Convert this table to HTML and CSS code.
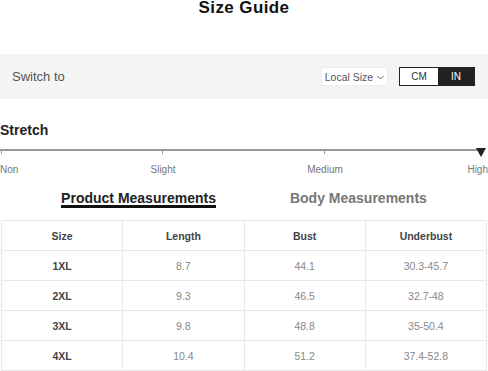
FILE: index.html
```html
<!DOCTYPE html>
<html>
<head>
<meta charset="utf-8">
<link rel="stylesheet" href="styles.css">
</head>
<body>
<div class="page">
  <h1 class="title">Size Guide</h1>
  <div class="switch-bar">
    <span class="switch-label">Switch to</span>
    <div class="switch-controls">
      <div class="local-size">Local Size
        <svg class="chev" width="7" height="5" viewBox="0 0 7 5"><path d="M0.5 1 L3.5 4 L6.5 1" fill="none" stroke="#666" stroke-width="1"/></svg>
      </div>
      <div class="unit-toggle">
        <span class="unit">CM</span>
        <span class="unit active">IN</span>
      </div>
    </div>
  </div>
  <div class="stretch">
    <div class="stretch-title">Stretch</div>
    <div class="scale">
      <div class="scale-line"></div>
      <span class="tick t0"></span>
      <span class="tick t1"></span>
      <span class="tick t2"></span>
      <span class="marker"></span>
    </div>
    <div class="scale-labels">
      <span class="lab l0">Non</span>
      <span class="lab l1">Slight</span>
      <span class="lab l2">Medium</span>
      <span class="lab l3">High</span>
    </div>
  </div>
  <div class="tabs">
    <span class="tab active">Product Measurements</span>
    <span class="tab">Body Measurements</span>
  </div>
  <table class="size-table">
    <thead>
      <tr><th>Size</th><th>Length</th><th>Bust</th><th>Underbust</th></tr>
    </thead>
    <tbody>
      <tr><td class="sz">1XL</td><td>8.7</td><td>44.1</td><td>30.3-45.7</td></tr>
      <tr><td class="sz">2XL</td><td>9.3</td><td>46.5</td><td>32.7-48</td></tr>
      <tr><td class="sz">3XL</td><td>9.8</td><td>48.8</td><td>35-50.4</td></tr>
      <tr><td class="sz">4XL</td><td>10.4</td><td>51.2</td><td>37.4-52.8</td></tr>
    </tbody>
  </table>
</div>
</body>
</html>
```

FILE: styles.css
```css
* { box-sizing: border-box; }
html, body { margin: 0; padding: 0; background: #fff; }
body { font-family: "Liberation Sans", Arial, sans-serif; color: #222; }
.page { width: 488px; overflow: hidden; }

.title {
  margin: 0;
  height: 54px;
  padding-top: 1px;
  text-align: center;
  font-size: 17px;
  line-height: 14px;
  font-weight: 900;
  color: #111;
  letter-spacing: 0.4px;
}

.switch-bar {
  height: 45px;
  background: #f4f4f4;
  display: flex;
  align-items: center;
  justify-content: space-between;
  padding: 0 13px 0 12px;
}
.switch-label { font-size: 13px; color: #555; }
.switch-controls { display: flex; align-items: center; gap: 11px; }
.local-size {
  height: 19px;
  width: 67px;
  background: #fff;
  border: 1px solid #ececec;
  font-size: 10.5px;
  color: #555;
  display: flex;
  align-items: center;
  justify-content: center;
  gap: 4px;
}
.chev { margin-top: 1px; }
.unit-toggle {
  display: flex;
  height: 19px;
  border: 1px solid #222;
}
.unit {
  width: 38px;
  display: flex;
  align-items: center;
  justify-content: center;
  font-size: 10px;
  color: #333;
  background: #fff;
}
.unit.active { background: #222; color: #fff; width: 36px; }

.stretch { padding-top: 24px; }
.stretch-title { font-size: 14px; font-weight: bold; color: #222; height: 15px; line-height: 15px; }
.scale { position: relative; height: 18px; margin-top: 10px; }
.scale-line { position: absolute; left: 0; right: 4px; top: 1px; height: 2px; background: #999; }
.tick { position: absolute; top: 1px; width: 1px; height: 5px; background: #999; }
.t0 { left: 1px; }
.t1 { left: 162px; }
.t2 { left: 324px; }
.marker {
  position: absolute;
  right: 2px;
  top: 0;
  width: 0; height: 0;
  border-left: 5px solid transparent;
  border-right: 5px solid transparent;
  border-top: 9px solid #222;
}
.scale-labels { position: relative; height: 14px; margin-top: -2px; font-size: 10px; color: #777; }
.lab { position: absolute; top: 0; }
.l0 { left: 0; }
.l1 { left: 163px; transform: translateX(-50%); }
.l2 { left: 325px; transform: translateX(-50%); }
.l3 { right: 0; }

.tabs {
  display: flex;
  justify-content: center;
  align-items: flex-start;
  gap: 74px;
  padding-top: 11px;
  height: 42px;
}
.tab {
  font-size: 14px;
  font-weight: bold;
  color: #777;
  height: 19px;
  line-height: 18px;
}
.tab.active { color: #222; border-bottom: 3px solid #111; }

.size-table {
  margin-left: 1px;
  width: 486px;
  border-collapse: collapse;
  table-layout: fixed;
}
.size-table th, .size-table td {
  border: 1px solid #e8e8e8;
  height: 30px;
  padding: 0;
  text-align: center;
  font-size: 10.5px;
  color: #888;
}
.size-table th { color: #444; font-weight: bold; }
.size-table td.sz { color: #444; font-weight: bold; }
```
